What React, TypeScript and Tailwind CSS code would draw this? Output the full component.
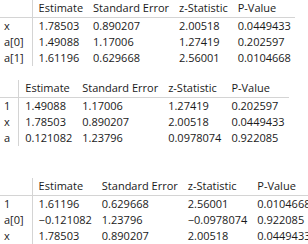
type Row = [string, string, string, string, string];

const headers = ['Estimate', 'Standard Error', 'z-Statistic', 'P-Value'];

const tables: Row[][] = [
  [
    ['x', '1.78503', '0.890207', '2.00518', '0.0449433'],
    ['a[0]', '1.49088', '1.17006', '1.27419', '0.202597'],
    ['a[1]', '1.61196', '0.629668', '2.56001', '0.0104668'],
  ],
  [
    ['1', '1.49088', '1.17006', '1.27419', '0.202597'],
    ['x', '1.78503', '0.890207', '2.00518', '0.0449433'],
    ['a', '0.121082', '1.23796', '0.0978074', '0.922085'],
  ],
  [
    ['1', '1.61196', '0.629668', '2.56001', '0.0104668'],
    ['a[0]', '\u22120.121082', '1.23796', '\u22120.0978074', '0.922085'],
    ['x', '1.78503', '0.890207', '2.00518', '0.0449433'],
  ],
];

function StatTable({ rows, className }: { rows: Row[]; className: string }) {
  return (
    <div
      className={
        'grid w-fit grid-cols-[auto_auto_auto_auto_auto] whitespace-nowrap text-[11px] leading-[16px] text-[#1a1a1a] ' +
        className
      }
    >
      <div className="border-r border-b border-[#d4d4d4] pl-1 pr-2 pb-[1px]" />
      {headers.map((h) => (
        <div key={h} className="border-b border-[#d4d4d4] pl-1.5 pr-1 pb-[1px]">
          {h}
        </div>
      ))}
      {rows.map((r) =>
        r.map((c, i) => (
          <div
            key={r[0] + i}
            className={i === 0 ? 'border-r border-[#d4d4d4] pl-1 pr-2' : 'pl-1.5 pr-1'}
          >
            {c}
          </div>
        ))
      )}
    </div>
  );
}

export default function App() {
  return (
    <div className="w-[308px] h-[244px] bg-white overflow-hidden font-['Open_Sans',sans-serif]">
      <div className="flex flex-col">
        <StatTable rows={tables[0]} className="" />
        <StatTable rows={tables[1]} className="mt-[14px]" />
        <StatTable rows={tables[2]} className="mt-[32px]" />
      </div>
    </div>
  );
}
